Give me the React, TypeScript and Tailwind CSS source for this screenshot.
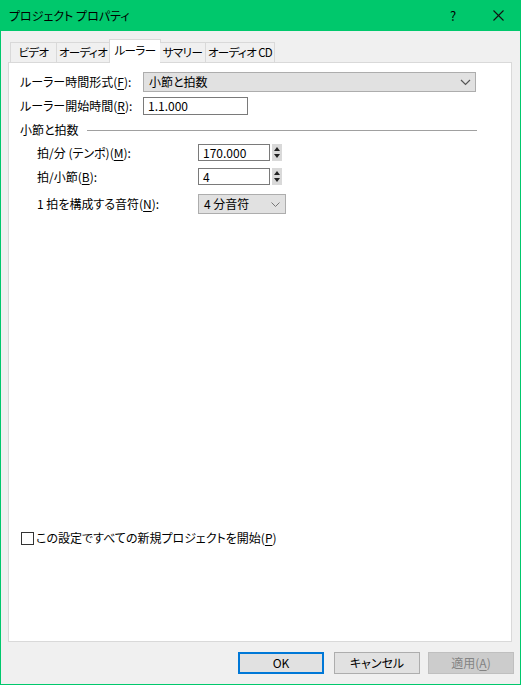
import React from "react";

const TABS = [
  { label: "ビデオ", w: "w-[47px]" },
  { label: "オーディオ", w: "w-[53px]" },
  { label: "ルーラー", w: "w-[52px]", active: true },
  { label: "サマリー", w: "w-[46px]" },
  { label: "オーディオ CD", w: "w-[69px]" },
];

function Chevron() {
  return (
    <svg width="11" height="7" viewBox="0 0 11 7" className="shrink-0">
      <polyline points="1,1 5.5,5.5 10,1" fill="none" stroke="#555" strokeWidth="1.2" />
    </svg>
  );
}

function Spinner() {
  return (
    <div className="ml-[2px] flex h-[17px] w-[10px] flex-col items-center justify-center gap-[3px] bg-[#d9d9d9]">
      <svg width="6" height="4" viewBox="0 0 6 4">
        <polygon points="3,0 6,4 0,4" fill="#222" />
      </svg>
      <svg width="6" height="4" viewBox="0 0 6 4">
        <polygon points="0,0 6,0 3,4" fill="#222" />
      </svg>
    </div>
  );
}

function Label({ text, k, rest }: { text: string; k: string; rest?: string }) {
  return (
    <span>
      {text}(<u className="underline-offset-2">{k}</u>){rest ?? ":"}
    </span>
  );
}

export default function App() {
  return (
    <div className="flex h-[685px] w-[521px] flex-col border-x border-b border-[#00c86c] bg-[#f0f0f0] font-['Noto_Sans_CJK_JP','Noto_Sans',sans-serif] text-[12px] text-black [font-feature-settings:'palt']">
      {/* Title bar */}
      <div className="-mx-px flex h-[31px] shrink-0 items-center bg-[#00c86c] pl-[9px]">
        <span className="flex-1 text-[12px]">プロジェクト プロパティ</span>
        <span className="w-[8px] text-[13px]">?</span>
        <div className="w-[17px]" />
        <div className="flex w-[46px] justify-center">
          <svg width="11" height="11" viewBox="0 0 11 11">
            <line x1="0.5" y1="0.5" x2="10.5" y2="10.5" stroke="#111" strokeWidth="1.1" />
            <line x1="10.5" y1="0.5" x2="0.5" y2="10.5" stroke="#111" strokeWidth="1.1" />
          </svg>
        </div>
      </div>

      {/* Body */}
      <div className="flex flex-1 flex-col pl-[7px] pr-[8px] pt-[8px]">
        {/* Tabs */}
        <div className="relative z-10 flex h-[23px] items-end pl-[2px] text-[11.5px] tracking-[-0.6px]">
          {TABS.map((t) =>
            t.active ? (
              <div
                key={t.label}
                className={`${t.w} -mx-px mb-[-1px] flex h-[24px] shrink-0 items-center justify-center whitespace-nowrap border border-b-0 border-[#d9d9d9] bg-white pb-[2px]`}
              >
                {t.label}
              </div>
            ) : (
              <div
                key={t.label}
                className={`${t.w} flex h-[20px] shrink-0 items-center justify-center whitespace-nowrap border border-b-0 border-l-0 border-[#d9d9d9] bg-[#f0f0f0] first:border-l`}
              >
                {t.label}
              </div>
            )
          )}
        </div>

        {/* Panel */}
        <div className="flex h-[580px] w-[504px] flex-col border border-[#d9d9d9] bg-white pl-[11px]">
          <div className="mt-[9px] flex h-[20px] items-center">
            <div className="w-[123px] whitespace-nowrap">
              <Label text="ルーラー時間形式" k="F" />
            </div>
            <div className="flex h-[20px] w-[333px] items-center justify-between border border-[#adadad] bg-[#e1e1e1] pl-[5px] pr-[4px]">
              <span>小節と拍数</span>
              <Chevron />
            </div>
          </div>

          <div className="mt-[5px] flex h-[18px] items-center">
            <div className="w-[123px] whitespace-nowrap">
              <Label text="ルーラー開始時間" k="R" />
            </div>
            <div className="flex h-[18px] w-[105px] items-center border border-[#7a7a7a] pl-[4px]">1.1.000</div>
          </div>

          <div className="mt-[7px] flex h-[16px] items-center">
            <span>小節と拍数</span>
            <div className="ml-[8px] h-px w-[390px] bg-[#a0a0a0]" />
          </div>

          <div className="pl-[17px]">
            <div className="mt-[6px] flex h-[17px] items-center">
              <div className="w-[161px] whitespace-nowrap">
                <Label text="拍/分 (テンポ)" k="M" />
              </div>
              <div className="flex h-[17px] w-[72px] items-center border border-[#7a7a7a] pl-[4px]">170.000</div>
              <Spinner />
            </div>

            <div className="mt-[7px] flex h-[17px] items-center">
              <div className="w-[161px] whitespace-nowrap">
                <Label text="拍/小節" k="B" />
              </div>
              <div className="flex h-[17px] w-[72px] items-center border border-[#7a7a7a] pl-[4px]">4</div>
              <Spinner />
            </div>

            <div className="mt-[9px] flex h-[20px] items-center">
              <div className="w-[161px] whitespace-nowrap">
                <Label text="1 拍を構成する音符" k="N" />
              </div>
              <div className="flex h-[20px] w-[88px] items-center justify-between border border-[#adadad] bg-[#e1e1e1] pl-[5px] pr-[5px]">
                <span>4&nbsp;分音符</span>
                <svg width="9" height="5" viewBox="0 0 9 5">
                  <polyline points="0.5,0.5 4.5,4.5 8.5,0.5" fill="none" stroke="#777" strokeWidth="1" />
                </svg>
              </div>
            </div>
          </div>

          <div className="flex-1" />

          <div className="mb-[96px] ml-[1px] flex h-[14px] items-center">
            <div className="h-[13px] w-[13px] border border-[#333] bg-white" />
            <span className="ml-[2px]">
              この設定ですべての新規プロジェクトを開始(<u className="underline-offset-2">P</u>)
            </span>
          </div>
        </div>

        {/* Buttons */}
        <div className="-mr-[2px] mt-[10px] flex justify-end gap-[10px]">
          <button className="h-[22px] w-[86px] border-2 border-[#0078d7] bg-[#e1e1e1]">OK</button>
          <button className="h-[22px] w-[86px] border border-[#adadad] bg-[#e1e1e1]">キャンセル</button>
          <button className="-ml-[2px] h-[22px] w-[86px] border border-[#bfbfbf] bg-[#cccccc] text-[#838383]">
            適用(<u className="underline-offset-2">A</u>)
          </button>
        </div>
      </div>
    </div>
  );
}
